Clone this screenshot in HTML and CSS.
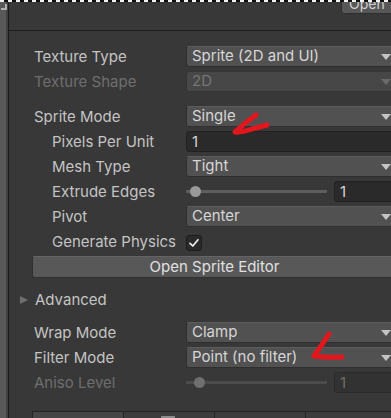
FILE: index.html
```html
<!DOCTYPE html>
<html>
<head>
<meta charset="utf-8">
<link rel="stylesheet" href="styles.css">
</head>
<body>
<div class="topline"></div>
<div class="window">
  <div class="gutter"><div class="gutter-icon"></div></div>
  <div class="panel">
    <div class="header"><div class="open-btn">Open</div></div>
    <div class="content">
      <div class="row">
        <div class="label">Texture Type</div>
        <div class="dropdown">Sprite (2D and UI)<span class="arrow"></span></div>
      </div>
      <div class="row disabled">
        <div class="label">Texture Shape</div>
        <div class="dropdown">2D<span class="arrow"></span></div>
      </div>
      <div class="row section">
        <div class="label">Sprite Mode</div>
        <div class="dropdown">Single<span class="arrow"></span></div>
      </div>
      <div class="row">
        <div class="label nested">Pixels Per Unit</div>
        <div class="field">1</div>
      </div>
      <div class="row">
        <div class="label nested">Mesh Type</div>
        <div class="dropdown">Tight<span class="arrow"></span></div>
      </div>
      <div class="row">
        <div class="label nested">Extrude Edges</div>
        <div class="slider-wrap">
          <div class="slider"><div class="track"></div><div class="thumb" style="left: 4px"></div></div>
          <div class="field">1</div>
        </div>
      </div>
      <div class="row">
        <div class="label nested">Pivot</div>
        <div class="dropdown">Center<span class="arrow"></span></div>
      </div>
      <div class="row">
        <div class="label nested">Generate Physics</div>
        <div class="check-cell">
          <div class="checkbox">
            <svg viewBox="0 0 16 16" width="16" height="16"><path d="M4 8.3 L6.8 11 L12 4.8" fill="none" stroke="#f0f0f0" stroke-width="1.7" stroke-linecap="round" stroke-linejoin="round"/></svg>
          </div>
        </div>
      </div>
      <div class="wide-btn">Open Sprite Editor</div>
      <div class="foldout"><span class="tri"></span>Advanced</div>
      <div class="row section2">
        <div class="label">Wrap Mode</div>
        <div class="dropdown">Clamp<span class="arrow"></span></div>
      </div>
      <div class="row">
        <div class="label">Filter Mode</div>
        <div class="dropdown">Point (no filter)<span class="arrow"></span></div>
      </div>
      <div class="row disabled">
        <div class="label">Aniso Level</div>
        <div class="slider-wrap">
          <div class="slider"><div class="track"></div><div class="thumb" style="left: 8px"></div></div>
          <div class="field">1</div>
        </div>
      </div>
      <div class="tabs">
        <div class="tab active"></div>
        <div class="tab"><span class="tab-icon"></span></div>
        <div class="tab"></div>
        <div class="tab"></div>
      </div>
    </div>
  </div>
</div>
<svg class="scribble" width="391" height="418" viewBox="0 0 391 418">
  <path d="M256 115 Q246 122 235 132 Q240 133 252 129 L267 125" fill="none" stroke="#e3161d" stroke-width="5" stroke-linecap="round" stroke-linejoin="round"/>
  <path d="M329 334 Q322 345 314 356 Q328 358 342 357" fill="none" stroke="#e3161d" stroke-width="5" stroke-linecap="round" stroke-linejoin="round"/>
</svg>
</body>
</html>
```
FILE: styles.css
```css
html, body {
  margin: 0;
  padding: 0;
}
body {
  width: 391px;
  height: 418px;
  overflow: hidden;
  background: #383838;
  font-family: Inter, "Noto Sans", sans-serif;
  font-size: 15px;
  color: #c4c4c4;
  position: relative;
}
.topline {
  height: 2px;
  width: 400px;
  background: repeating-linear-gradient(90deg, #f2f2f2 0 4px, #111 4px 8px);
}
.window {
  display: flex;
  width: 400px;
  height: 416px;
  overflow: hidden;
}
.gutter {
  width: 6px;
  flex: none;
  background: #595959;
  border-right: 2px solid #414141;
  box-shadow: 1px 0 0 #1a1a1a;
  margin-right: 1px;
  position: relative;
}
.gutter-icon {
  position: absolute;
  left: 1px;
  top: 2px;
  width: 4px;
  height: 4px;
  border-right: 2px solid #d8d8d8;
  border-bottom: 2px solid #d8d8d8;
  opacity: 0.7;
}
.panel {
  flex: 1;
  display: flex;
  flex-direction: column;
  background: #383838;
}
.header {
  flex: none;
  height: 28px;
  border-bottom: 1px solid #1e1e1e;
  display: flex;
  justify-content: flex-end;
  align-items: flex-start;
  overflow: hidden;
}
.open-btn {
  flex: none;
  margin-top: -9px;
  margin-right: -8px;
  width: 67px;
  height: 21px;
  background: #575757;
  border: 1px solid #2e2e2e;
  border-radius: 3px;
  color: #d0d0d0;
  padding-left: 7px;
  box-sizing: border-box;
  font-size: 14px;
  line-height: 20px;
}
.content {
  flex: none;
  padding: 15px 3px 0 24px;
  display: flex;
  flex-direction: column;
  gap: 4px;
}
.row {
  display: grid;
  grid-template-columns: 153px 1fr;
  height: 21px;
  align-items: center;
}
.row.section { margin-top: 10px; }
.row.section2 { margin-top: 8px; }
.label {
  padding-left: 1px;
  white-space: nowrap;
  line-height: 21px;
}
.label.nested { padding-left: 19px; }
.dropdown {
  position: relative;
  height: 21px;
  box-sizing: border-box;
  background: #515151;
  border: 1px solid #2f2f2f;
  border-top-color: #5c5c5c;
  border-radius: 3px;
  color: #d6d6d6;
  padding-left: 5px;
  line-height: 18px;
  white-space: nowrap;
}
.arrow {
  position: absolute;
  right: 5px;
  top: 7px;
  width: 0;
  height: 0;
  border-left: 5px solid transparent;
  border-right: 5px solid transparent;
  border-top: 6px solid #c4c4c4;
}
.field {
  height: 21px;
  box-sizing: border-box;
  background: #2a2a2a;
  border: 1px solid #212121;
  border-radius: 3px;
  color: #d6d6d6;
  padding-left: 5px;
  line-height: 20px;
}
.slider-wrap {
  display: flex;
  gap: 7px;
  align-items: center;
}
.slider-wrap .field { flex: 1; }
.slider {
  position: relative;
  width: 141px;
  height: 21px;
  flex: none;
}
.track {
  position: absolute;
  left: 0;
  right: 0;
  top: 9px;
  height: 3px;
  background: #5e5e5e;
  border-radius: 1px;
}
.thumb {
  position: absolute;
  top: 5px;
  width: 11px;
  height: 11px;
  border-radius: 50%;
  background: #999999;
}
.check-cell {
  display: flex;
  align-items: center;
  height: 21px;
}
.checkbox {
  width: 16px;
  height: 16px;
  box-sizing: border-box;
  background: #2a2a2a;
  border: 1px solid #1c1c1c;
  border-radius: 3px;
  display: flex;
  align-items: center;
  justify-content: center;
  margin-top: 3px;
}
.checkbox svg { display: block; margin: -1px; }
.wide-btn {
  margin-left: -1px;
  height: 22px;
  box-sizing: border-box;
  background: #585858;
  border: 1px solid #303030;
  border-top-color: #646464;
  border-radius: 3px;
  color: #e0e0e0;
  text-align: center;
  line-height: 20px;
}
.foldout {
  margin-top: 7px;
  margin-left: -13px;
  height: 21px;
  line-height: 21px;
  display: flex;
  align-items: center;
}
.tri {
  width: 0;
  height: 0;
  border-top: 4.5px solid transparent;
  border-bottom: 4.5px solid transparent;
  border-left: 8px solid #6e6e6e;
  margin-right: 7px;
}
.disabled .label { color: #6e6e6e; }
.disabled .dropdown {
  background: #474747;
  border-color: #343434;
  color: #757575;
}
.disabled .arrow { border-top-color: #6a6a6a; }
.disabled .field {
  background: #323232;
  border-color: #2a2a2a;
  color: #6e6e6e;
}
.disabled .thumb { background: #6f6f6f; }
.disabled .track { background: #4c4c4c; }
.tabs {
  margin-top: 14px;
  margin-left: -1px;
  display: flex;
  height: 20px;
  border-top: 1px solid #242424;
}
.tab {
  width: 90px;
  flex: none;
  border-left: 1px solid #242424;
  background: #3c3c3c;
  position: relative;
}
.tab.active { background: #464646; }
.tab-icon {
  position: absolute;
  left: 37px;
  top: 4px;
  width: 14px;
  height: 4px;
  background: #8c8c8c;
  border-radius: 1px;
}
.scribble {
  position: absolute;
  left: 0;
  top: 0;
  pointer-events: none;
}
```
